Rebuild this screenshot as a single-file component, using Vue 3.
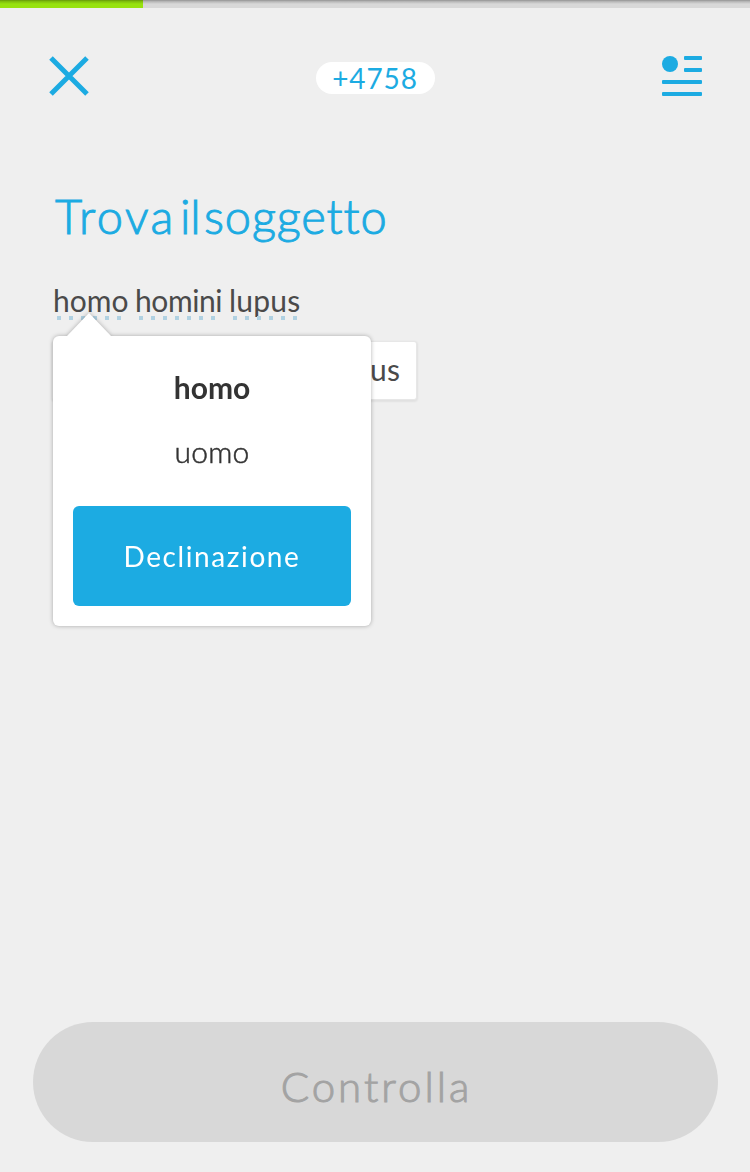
<script setup>
const progress = 143 / 750 * 100
const sentence = [
  { text: 'homo', dots: 6 },
  { text: 'homini', dots: 7 },
  { text: 'lupus', dots: 6 },
]
</script>

<template>
  <div class="screen">
    <div class="progress"><div class="bar" :style="{ width: progress + '%' }"></div></div>
    <header class="top">
      <svg class="close" width="42" height="42" viewBox="0 0 42 42">
        <path d="M3 3 L39 39 M39 3 L3 39" stroke="#1cabe2" stroke-width="5" fill="none" />
      </svg>
      <div class="score"><span>+4758</span></div>
      <svg class="notes" width="40" height="40" viewBox="0 0 40 40" fill="#1cabe2">
        <circle cx="8" cy="8" r="8" />
        <rect x="22" y="0" width="18" height="4" rx="1" />
        <rect x="22" y="12" width="18" height="4" rx="1" />
        <rect x="0" y="24" width="40" height="4" rx="1" />
        <rect x="0" y="36" width="40" height="4" rx="1" />
      </svg>
    </header>
    <h1 class="title"><span class="w1">Trova</span> <span class="w2">il</span> <span class="w3">soggetto</span></h1>
    <div class="sentence">
      <div v-for="(w, i) in sentence" :key="w.text" class="word" :class="'word' + i">
        <span>{{ w.text }}</span>
        <div class="dots"><i v-for="n in w.dots" :key="n"></i></div>
        <div v-if="i === 0" class="popup">
          <div class="arrow"></div>
          <div class="card">
            <strong class="term">homo</strong>
            <div class="meaning">uomo</div>
            <button class="declension">Declinazione</button>
          </div>
        </div>
      </div>
    </div>
    <div class="choices">
      <div class="choice blank"></div>
      <div class="choice">lupus</div>
    </div>
    <button class="check">Controlla</button>
  </div>
</template>

<style>
html, body { background: #efefef; }
</style>

<style scoped>
.screen {
  width: 750px;
  height: 1172px;
  display: flex;
  flex-direction: column;
  overflow: hidden;
  background: #efefef;
  font-family: Lato, "Open Sans", sans-serif;
  font-variant-ligatures: none;
  color: #4a4a4a;
}
.progress {
  height: 8px;
  flex: none;
  background: #d8d8d8;
  position: relative;
}
.progress::after {
  content: "";
  position: absolute;
  inset: 0;
  background: linear-gradient(rgba(0, 0, 0, 0.27) 1px, rgba(0, 0, 0, 0.16) 1.5px, transparent 4px);
}
.bar { height: 100%; background: #97e20f; }
.top {
  height: 42px;
  margin: 47px 48px 0;
  display: grid;
  grid-template-columns: 1fr 119px 1fr;
  align-items: center;
}
.notes { justify-self: end; }
.score {
  height: 32px;
  margin-top: 4px;
  border-radius: 16px;
  background: #fff;
  color: #1cabe2;
  font-size: 28px;
  line-height: 32px;
  letter-spacing: 0.9px;
  text-align: center;
}
.title {
  margin: 87px 0 0 55px;
  height: 65px;
  display: flex;
  color: #1cabe2;
  font-size: 47px;
  line-height: 65px;
  font-weight: 300;
  -webkit-text-stroke: 1px #1cabe2;
}
.w1 { width: 125px; letter-spacing: 2.5px; }
.w2 { width: 24px; letter-spacing: -0.3px; }
.w3 { letter-spacing: 0.9px; }
.sentence {
  height: 40px;
  margin: 33px 0 0 53px;
  display: flex;
  font-size: 30px;
  line-height: 36px;
}
.word { position: relative; height: 40px; }
.word0 { width: 82px; }
.word1 { width: 94px; letter-spacing: -0.4px; }
.word2 { letter-spacing: 0.2px; }
.dots {
  position: absolute;
  left: 4px;
  top: 34px;
  display: flex;
  gap: 8px;
}
.dots i { width: 4px; height: 4px; background: #b0d1e2; }
.popup {
  position: absolute;
  z-index: 2;
  left: 0;
  top: 54px;
  width: 318px;
  letter-spacing: 0;
  filter: drop-shadow(0 0 2px rgba(0, 0, 0, 0.3));
}
.arrow {
  position: absolute;
  left: 13px;
  top: -23px;
  width: 46px;
  height: 24px;
  background: #fff;
  clip-path: polygon(50% 0, 100% 100%, 0 100%);
}
.card {
  box-sizing: border-box;
  height: 290px;
  padding: 31px 20px 20px;
  border-radius: 6px;
  background: #fff;
  display: flex;
  flex-direction: column;
  align-items: center;
  color: #333;
}
.term { height: 64px; line-height: 40px; font-weight: 700; }
.meaning {
  height: 75px;
  line-height: 40px;
  font-weight: 300;
  letter-spacing: 0.2px;
  -webkit-text-stroke: 0.5px #333;
}
.declension {
  width: 278px;
  height: 100px;
  padding: 0;
  border: 0;
  border-radius: 6px;
  background: #1cabe2;
  color: #fff;
  font: 400 28px/99px Lato, sans-serif;
  letter-spacing: 1.6px;
}
.choices {
  width: 363px;
  margin: 20px 0 0 53px;
  display: flex;
  justify-content: space-between;
}
.choice {
  height: 57px;
  padding: 0 16px;
  border-radius: 2px;
  background: #fff;
  box-shadow: 0 0 0 1px #e7e7e7, 0 1px 2px 2px rgba(0, 0, 0, 0.06);
  font-size: 30px;
  line-height: 55px;
  letter-spacing: 0.1px;
}
.blank { width: 75px; }
.check {
  width: 685px;
  height: 120px;
  margin: auto 0 30px 33px;
  padding: 8px 0 0 2px;
  border: 0;
  border-radius: 60px;
  background: #d8d8d8;
  color: #a3a3a3;
  font: 300 42px/112px Lato, sans-serif;
  letter-spacing: 3px;
  -webkit-text-stroke: 1px #a3a3a3;
}
</style>
